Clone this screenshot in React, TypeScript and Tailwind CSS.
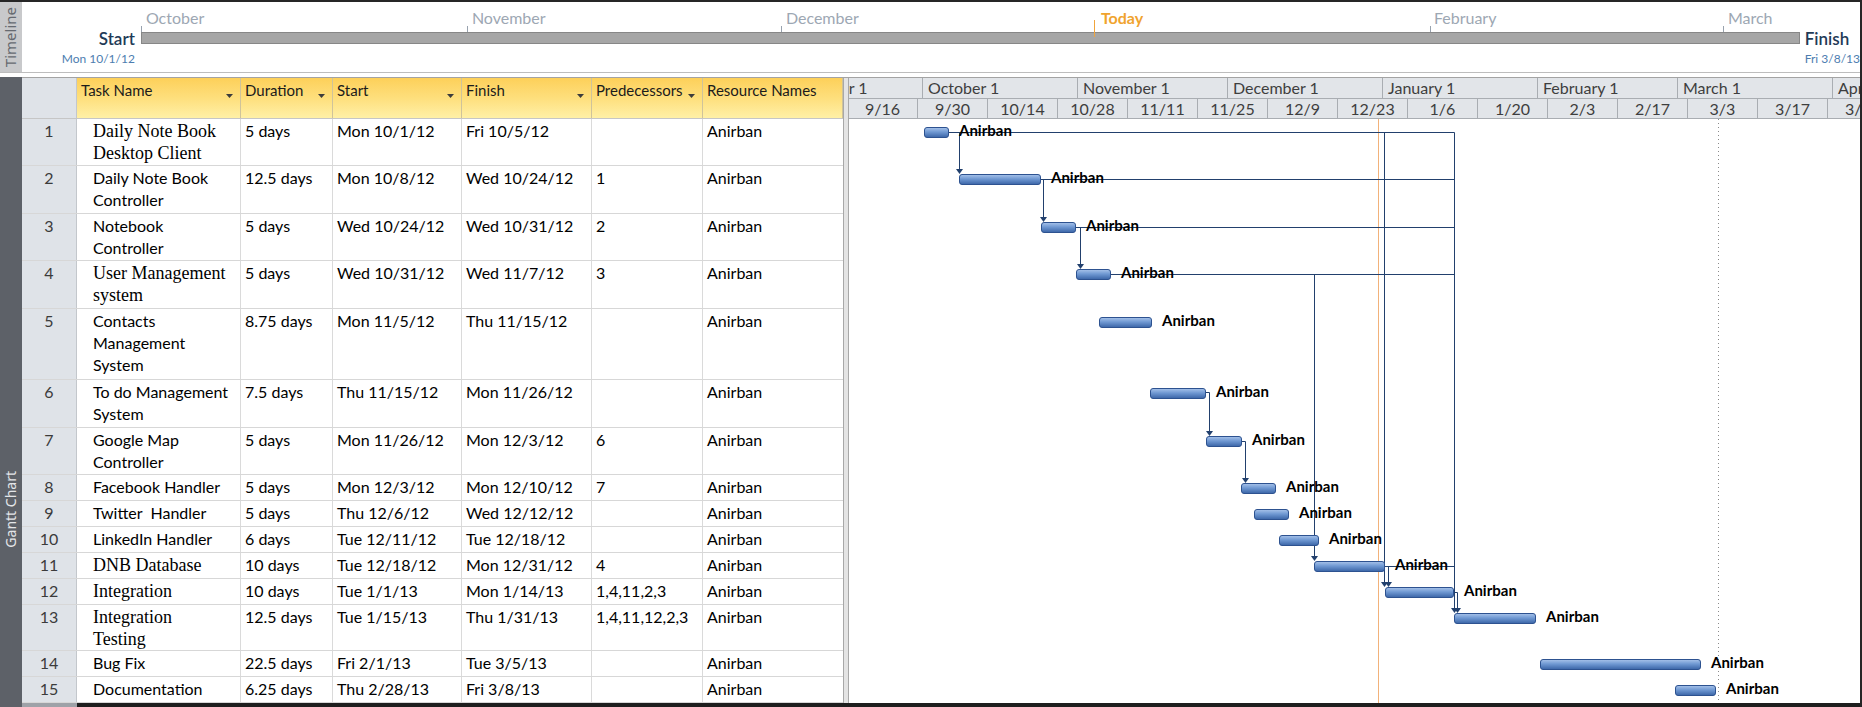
import React from "react";

type Task = {
  id: number;
  name: string[];
  serif?: boolean;
  dur: string;
  start: string;
  finish: string;
  pred: string;
  h: string;
  px: number;
  bar: [number, number];
};

const tasks: Task[] = [
  { id: 1, name: ["Daily Note Book", "Desktop Client"], serif: true, dur: "5 days", start: "Mon 10/1/12", finish: "Fri 10/5/12", pred: "", h: "h-[47px]", px: 47, bar: [924, 948] },
  { id: 2, name: ["Daily Note Book", "Controller"], dur: "12.5 days", start: "Mon 10/8/12", finish: "Wed 10/24/12", pred: "1", h: "h-[48px]", px: 48, bar: [959, 1040] },
  { id: 3, name: ["Notebook", "Controller"], dur: "5 days", start: "Wed 10/24/12", finish: "Wed 10/31/12", pred: "2", h: "h-[47px]", px: 47, bar: [1041, 1075] },
  { id: 4, name: ["User Management", "system"], serif: true, dur: "5 days", start: "Wed 10/31/12", finish: "Wed 11/7/12", pred: "3", h: "h-[48px]", px: 48, bar: [1076, 1110] },
  { id: 5, name: ["Contacts", "Management", "System"], dur: "8.75 days", start: "Mon 11/5/12", finish: "Thu 11/15/12", pred: "", h: "h-[71px]", px: 71, bar: [1099, 1151] },
  { id: 6, name: ["To do Management", "System"], dur: "7.5 days", start: "Thu 11/15/12", finish: "Mon 11/26/12", pred: "", h: "h-[48px]", px: 48, bar: [1150, 1205] },
  { id: 7, name: ["Google Map", "Controller"], dur: "5 days", start: "Mon 11/26/12", finish: "Mon 12/3/12", pred: "6", h: "h-[47px]", px: 47, bar: [1206, 1241] },
  { id: 8, name: ["Facebook Handler"], dur: "5 days", start: "Mon 12/3/12", finish: "Mon 12/10/12", pred: "7", h: "h-[26px]", px: 26, bar: [1241, 1275] },
  { id: 9, name: ["Twitter  Handler"], dur: "5 days", start: "Thu 12/6/12", finish: "Wed 12/12/12", pred: "", h: "h-[26px]", px: 26, bar: [1254, 1288] },
  { id: 10, name: ["LinkedIn Handler"], dur: "6 days", start: "Tue 12/11/12", finish: "Tue 12/18/12", pred: "", h: "h-[26px]", px: 26, bar: [1279, 1318] },
  { id: 11, name: ["DNB Database"], serif: true, dur: "10 days", start: "Tue 12/18/12", finish: "Mon 12/31/12", pred: "4", h: "h-[26px]", px: 26, bar: [1314, 1384] },
  { id: 12, name: ["Integration"], serif: true, dur: "10 days", start: "Tue 1/1/13", finish: "Mon 1/14/13", pred: "1,4,11,2,3", h: "h-[26px]", px: 26, bar: [1385, 1453] },
  { id: 13, name: ["Integration", "Testing"], serif: true, dur: "12.5 days", start: "Tue 1/15/13", finish: "Thu 1/31/13", pred: "1,4,11,12,2,3", h: "h-[46px]", px: 46, bar: [1454, 1535] },
  { id: 14, name: ["Bug Fix"], dur: "22.5 days", start: "Fri 2/1/13", finish: "Tue 3/5/13", pred: "", h: "h-[26px]", px: 26, bar: [1540, 1700] },
  { id: 15, name: ["Documentation"], dur: "6.25 days", start: "Thu 2/28/13", finish: "Fri 3/8/13", pred: "", h: "h-[26px]", px: 26, bar: [1675, 1715] },
];

const months = [
  { label: "September 1", w: "w-[150px]" },
  { label: "October 1", w: "w-[155px]" },
  { label: "November 1", w: "w-[150px]" },
  { label: "December 1", w: "w-[155px]" },
  { label: "January 1", w: "w-[155px]" },
  { label: "February 1", w: "w-[140px]" },
  { label: "March 1", w: "w-[155px]" },
  { label: "April 1", w: "w-[150px]" },
];

const weeks = ["9/16", "9/30", "10/14", "10/28", "11/11", "11/25", "12/9", "12/23", "1/6", "1/20", "2/3", "2/17", "3/3", "3/17", "3/31"];

// chart origin in page pixels
const OX = 849;
const OY = 119;

const tops: number[] = [];
tasks.reduce((y, t) => {
  tops.push(y);
  return y + t.px;
}, 119);

const hLinks: [number, number, number][] = [
  [132, 948, 1454],
  [179, 1040, 1454],
  [227, 1075, 1454],
  [274, 1110, 1454],
  [392, 1205, 1209],
  [441, 1241, 1245],
  [566, 1384, 1454],
  [592, 1453, 1457],
];

const vLinks: [number, number, number][] = [
  [959, 132, 174],
  [1043, 179, 222],
  [1080, 227, 269],
  [1384, 132, 587],
  [1454, 132, 613],
  [1314, 274, 561],
  [1209, 392, 436],
  [1245, 441, 483],
  [1388, 566, 587],
  [1457, 592, 613],
];

function Arrow() {
  return (
    <svg width="7" height="4" viewBox="0 0 7 4" className="absolute right-[7px] top-[16px]">
      <path d="M0 0h7L3.5 4z" fill="#3c3c3c" />
    </svg>
  );
}

function Timeline() {
  const marks = [
    { x: "left-[0px]", lx: "left-[5px]", label: "October" },
    { x: "left-[326px]", lx: "left-[331px]", label: "November" },
    { x: "left-[640px]", lx: "left-[645px]", label: "December" },
    { x: "left-[1289px]", lx: "left-[1293px]", label: "February" },
    { x: "left-[1582px]", lx: "left-[1587px]", label: "March" },
  ];
  return (
    <div className="flex h-[70px] shrink-0">
      <div className="w-[22px] bg-[#c8c9cb] flex items-center justify-center">
        <span className="[writing-mode:vertical-rl] rotate-180 text-[15px] leading-none text-[#666a70] font-['Noto_Sans',sans-serif]">
          Timeline
        </span>
      </div>
      <div className="w-[119px] flex flex-col items-end pr-[6px] pt-[27px]">
        <span className="text-[17px] leading-[20px] font-semibold text-[#1f3b57]">Start</span>
        <span className="mt-[3px] text-[12px] leading-[14px] text-[#4d7db0] whitespace-nowrap">Mon 10/1/12</span>
      </div>
      <div className="w-[1660px] relative">
        <div className="mt-[30px] h-[12px] bg-[#a6a6a6] border border-[#878787]" />
        {marks.map((m) => (
          <React.Fragment key={m.label}>
            <div className={`absolute top-[24px] h-[6px] w-px bg-[#98a2ae] ${m.x}`} />
            <span className={`absolute top-[6px] text-[16px] leading-[20px] text-[#9da7b3] ${m.lx}`}>{m.label}</span>
          </React.Fragment>
        ))}
        <div className="absolute left-[953px] top-[18px] h-[17px] w-px bg-[#f0a43c]" />
        <span className="absolute left-[960px] top-[6px] text-[16px] leading-[20px] font-bold text-[#f0a32e]">Today</span>
      </div>
      <div className="flex-1 flex flex-col pl-[5px] pt-[27px] whitespace-nowrap">
        <span className="text-[17px] leading-[20px] font-semibold text-[#1f3b57]">Finish</span>
        <span className="mt-[3px] text-[12px] leading-[14px] text-[#4d7db0]">Fri 3/8/13</span>
      </div>
    </div>
  );
}

const cols = "grid grid-cols-[55px_164px_92px_129px_130px_111px_140px]";

function Table() {
  const heads = ["Task Name", "Duration", "Start", "Finish", "Predecessors", "Resource Names"];
  return (
    <div className="w-[821px] shrink-0 flex flex-col">
      <div className={`${cols} h-[41px] border-b border-[#c6c6c6]`}>
        <div className="bg-[#dfe3e8] border-r border-[#c3c7cc]" />
        {heads.map((h, i) => (
          <div
            key={h}
            className="relative bg-linear-to-b from-[#fdd059] via-[#fedf7c] to-[#fff0a6] border-r border-[#cfc39a] pl-1 pt-[1px] text-[15px] leading-[22px] text-[#1b1b1b] whitespace-nowrap overflow-hidden"
          >
            {h}
            {i < 5 && <Arrow />}
          </div>
        ))}
      </div>
      {tasks.map((t) => (
        <div key={t.id} className={`${cols} ${t.h} border-b border-[#d7d7d7] text-[16px] leading-[22px] text-black`}>
          <div className="bg-[#dfe3e8] border-r border-[#c3c7cc] text-center pt-[1px] text-[#3b3b3b]">{t.id}</div>
          <div
            className={`border-r border-[#dadada] pl-4 pt-[1px] whitespace-pre ${
              t.serif ? "font-['Liberation_Serif',serif] text-[18px]" : ""
            }`}
          >
            {t.name.map((l) => (
              <div key={l}>{l}</div>
            ))}
          </div>
          <div className="border-r border-[#dadada] pl-1 pt-[1px] whitespace-nowrap">{t.dur}</div>
          <div className="border-r border-[#dadada] pl-1 pt-[1px] whitespace-nowrap">{t.start}</div>
          <div className="border-r border-[#dadada] pl-1 pt-[1px] whitespace-nowrap">{t.finish}</div>
          <div className="border-r border-[#dadada] pl-1 pt-[1px] whitespace-nowrap">{t.pred}</div>
          <div className="pl-1 pt-[1px]">Anirban</div>
        </div>
      ))}
    </div>
  );
}

function Chart() {
  return (
    <div className="flex-1 flex flex-col overflow-hidden">
      <div className="h-[21px] flex shrink-0 ml-[-76px] border-b border-[#a9adb2] bg-[#e2e5e9]">
        {months.map((m) => (
          <div
            key={m.label}
            className={`${m.w} shrink-0 border-r border-[#a9adb2] pl-[5px] text-[16px] leading-[20px] text-[#3e3e3e] whitespace-nowrap overflow-hidden`}
          >
            {m.label}
          </div>
        ))}
      </div>
      <div className="h-[20px] flex shrink-0 ml-[-1px] border-b border-[#a9adb2] bg-[#e2e5e9]">
        {weeks.map((w) => (
          <div
            key={w}
            className="w-[70px] shrink-0 border-r border-[#a9adb2] text-center text-[16px] leading-[19px] text-[#3e3e3e] whitespace-nowrap"
          >
            {w}
          </div>
        ))}
      </div>
      <div className="relative flex-1 bg-white">
        <svg width="1011" height="584" className="absolute left-0 top-0">
          <defs>
            <linearGradient id="barfill" x1="0" y1="0" x2="0" y2="1">
              <stop offset="0" stopColor="#a8c3ea" />
              <stop offset="0.45" stopColor="#6f98d2" />
              <stop offset="1" stopColor="#3a64a6" />
            </linearGradient>
          </defs>
          <line x1={1378.5 - OX} y1="0" x2={1378.5 - OX} y2="584" stroke="#f2b27a" strokeWidth="1" />
          <line x1={1718.5 - OX} y1="0" x2={1718.5 - OX} y2="584" stroke="#8a8a8a" strokeWidth="1" strokeDasharray="1 3" />
          {hLinks.map(([y, x1, x2], i) => (
            <line key={"h" + i} x1={x1 - OX} y1={y + 0.5 - OY} x2={x2 + 0.5 - OX} y2={y + 0.5 - OY} stroke="#22406d" strokeWidth="1" />
          ))}
          {vLinks.map(([x, y1, y2], i) => (
            <g key={"v" + i}>
              <line x1={x + 0.5 - OX} y1={y1 + 0.5 - OY} x2={x + 0.5 - OX} y2={y2 - 4 - OY} stroke="#22406d" strokeWidth="1" />
              <path d={`M${x + 0.5 - OX - 3.5} ${y2 - 5 - OY}h7l-3.5 5z`} fill="#22406d" />
            </g>
          ))}
          {tasks.map((t, i) => {
            const y = tops[i] + 8 - OY;
            return (
              <g key={t.id}>
                <rect
                  x={t.bar[0] - OX + 0.5}
                  y={y + 0.5}
                  width={t.bar[1] - t.bar[0]}
                  height="10"
                  rx="2.5"
                  fill="url(#barfill)"
                  stroke="#2d5290"
                  strokeWidth="1"
                />
                <text
                  x={t.bar[1] + 11 - OX}
                  y={y + 5}
                  dominantBaseline="middle"
                  fontFamily="Lato, sans-serif"
                  fontWeight="700"
                  fontSize="15"
                  fill="#000"
                >
                  Anirban
                </text>
              </g>
            );
          })}
        </svg>
      </div>
    </div>
  );
}

export default function App() {
  return (
    <div className="w-[1862px] h-[707px] overflow-hidden bg-white border-t-2 border-r-2 border-[#262626] flex flex-col font-['Lato',sans-serif]">
      <Timeline />
      <div className="h-[5px] shrink-0 border-t border-[#bdbdbd] bg-white" />
      <div className="flex h-[630px] shrink-0">
        <div className="w-[22px] shrink-0 bg-[#5d6168] flex flex-col justify-end items-center pb-[159px]">
          <span className="[writing-mode:vertical-rl] rotate-180 text-[14px] leading-none text-[#e3e5e8] font-['Noto_Sans',sans-serif] whitespace-nowrap">
            Gantt Chart
          </span>
        </div>
        <div className="flex-1 flex flex-col border-t border-[#a3a3a3]">
          <div className="flex flex-1">
            <Table />
            <div className="w-[6px] shrink-0 bg-[#e4e4e4] border-l border-r border-[#a8a8a8]" />
            <Chart />
          </div>
          <div className="h-[4px] shrink-0 flex">
            <div className="w-[55px] bg-[#9ea2a8]" />
            <div className="flex-1 bg-[#1e1e1e]" />
          </div>
        </div>
      </div>
    </div>
  );
}
